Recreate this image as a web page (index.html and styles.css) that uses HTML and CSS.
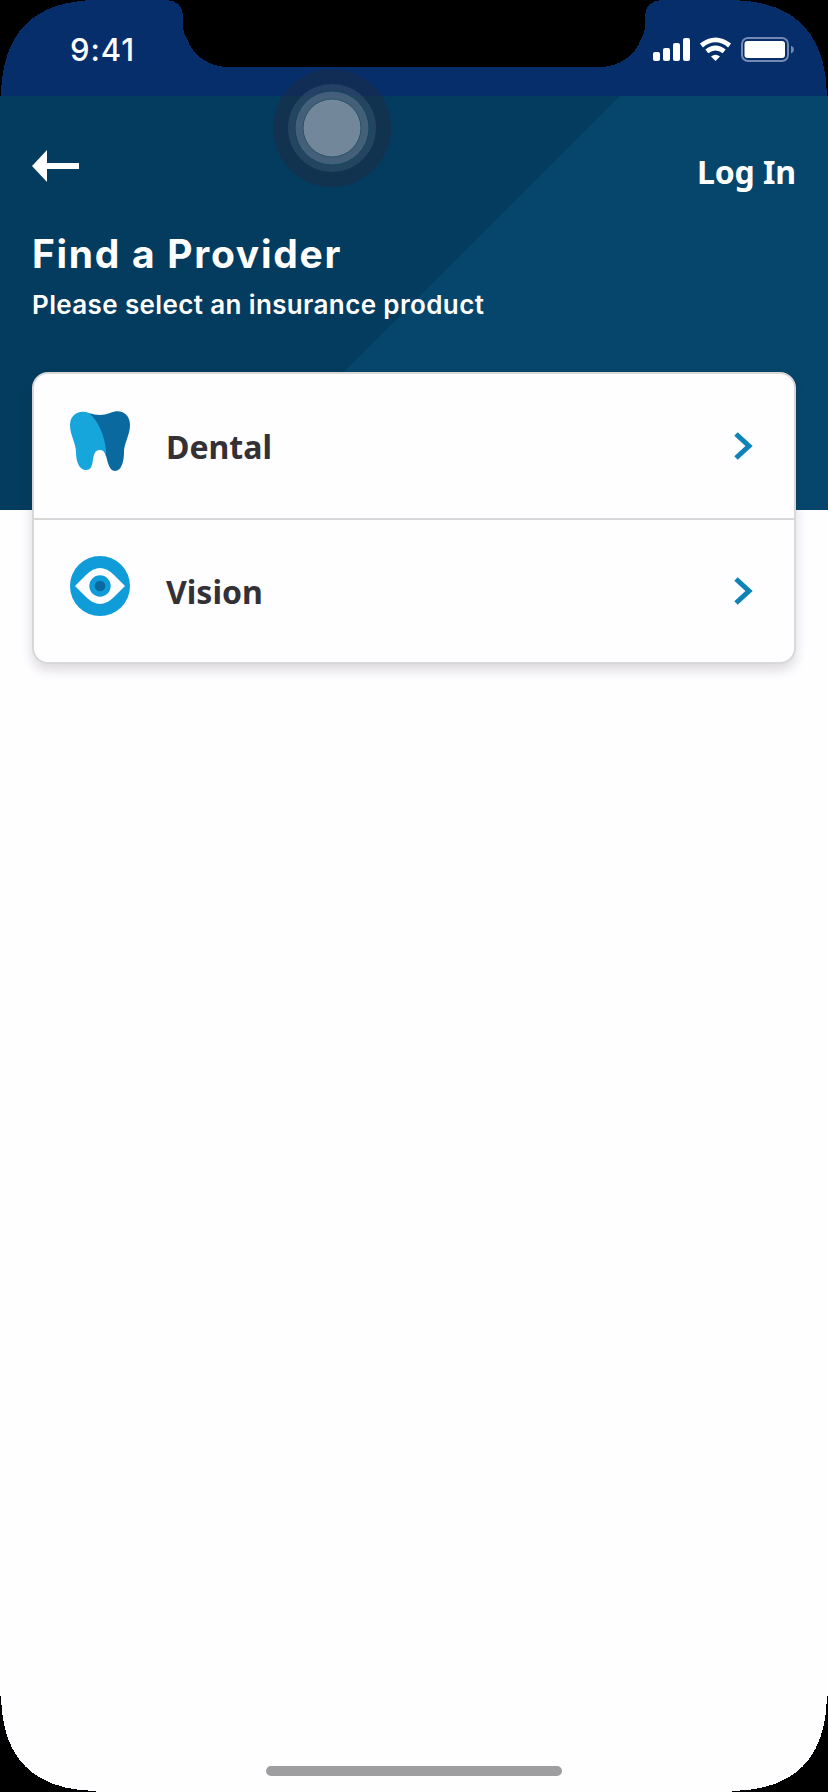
FILE: index.html
```html
<!DOCTYPE html>
<html lang="en">
<head>
<meta charset="utf-8">
<title>Find a Provider</title>
<link rel="stylesheet" href="styles.css">
</head>
<body>
<div class="screen">
  <div class="status-bar">
    <span class="time">9:41</span>
    <svg class="status-icons" width="142" height="26" viewBox="0 0 142 26" aria-hidden="true">
      <g fill="#fff">
        <rect x="0" y="15" width="7" height="9" rx="2"/>
        <rect x="10" y="11" width="7" height="13" rx="2"/>
        <rect x="20" y="6" width="7" height="18" rx="2"/>
        <rect x="30" y="1" width="7" height="23" rx="2"/>
        <path d="M62.500 24L58 19.600Q62.500 15.800 67 19.600Z"/>
        <rect x="91.500" y="4" width="40.500" height="17" rx="3"/>
      </g>
      <g fill="none" stroke="#fff" stroke-width="4.800">
        <path d="M48.400 8.500Q62.500 -2.700 76.600 8.500"/>
        <path d="M53.800 14.400Q62.500 7.600 71.200 14.400"/>
      </g>
      <rect x="89" y="1" width="46" height="23" rx="6" fill="none" stroke="#7488b4" stroke-width="2"/>
      <path d="M138 8.500Q141 10 141 12.500T138 16.500Z" fill="#7488b4"/>
    </svg>
  </div>
  <header class="hero">
    <div class="nav">
      <svg class="back" width="47" height="32" viewBox="0 0 47 32" role="img" aria-label="Back">
        <path d="M0 16L15 0V13H47V19H15V32Z" fill="#fff"/>
      </svg>
      <a class="login">Log In</a>
    </div>
    <h1 class="title">Find a Provider</h1>
    <p class="subtitle">Please select an insurance product</p>
  </header>
  <main class="products">
    <div class="product">
      <svg class="product-icon" width="60" height="60" viewBox="0 0 60 60" aria-hidden="true">
        <path d="M19 2Q30 6 40 2C51-3 60 3 60 14C60 24 54 32 54 41C54 51 51 60 45 60C39 60 38 51 36 45L29 24Z" fill="#0a699f"/>
        <path d="M19 2C9-2 0 4 0 14C0 24 6 32 6 41C6 52 10 59 16 59C27 59 19 39 30 39C33.500 39 35 42 36 45C37 30 29 10 19 2Z" fill="#16a6dc"/>
      </svg>
      <span class="product-name">Dental</span>
      <svg class="chevron" width="19" height="28" viewBox="0 0 19 28" aria-hidden="true"><path d="M2 2L15 14L2 26" fill="none" stroke="#0d83b9" stroke-width="5"/></svg>
    </div>
    <div class="product">
      <svg class="product-icon" width="60" height="60" viewBox="0 0 60 60" aria-hidden="true">
        <circle cx="30" cy="30" r="30" fill="#109bd9"/>
        <path d="M5 30L16 19Q23 12 30 12T44 19L55 30L44 41Q37 48 30 48T16 41Z" fill="#fefdff"/>
        <circle cx="30" cy="30" r="10.700" fill="#109bd9"/>
        <circle cx="30" cy="30" r="5.300" fill="#0a699f"/>
      </svg>
      <span class="product-name">Vision</span>
      <svg class="chevron" width="19" height="28" viewBox="0 0 19 28" aria-hidden="true"><path d="M2 2L15 14L2 26" fill="none" stroke="#0d83b9" stroke-width="5"/></svg>
    </div>
  </main>
  <div class="home-indicator"></div>

  <svg class="touch" width="120" height="120" viewBox="0 0 120 120" aria-hidden="true">
    <circle cx="60" cy="60" r="59" fill="#1d2940" fill-opacity=".5"/>
    <circle cx="60" cy="60" r="44" fill="#819caf" fill-opacity=".18"/>
    <circle cx="60" cy="60" r="37" fill="#a3b3c2" fill-opacity=".25" stroke="#164762"/>
    <circle cx="60" cy="60" r="29" fill="#728799" stroke="#27506a"/>
  </svg>
  <svg class="bezel" width="828" height="1792" viewBox="0 0 828 1792" shape-rendering="crispEdges" aria-hidden="true">
    <path d="M0 0H96C34 1 2 32 1 96H0Z"/>
    <path d="M828 0H732C794 1 826 32 827 96H828Z"/>
    <path d="M166 0C178 1 183 6 183 17C183 29 183 32 187 39C193 56 209 67 229 67H599C619 67 635 56 641 39C645 32 645 29 645 17C645 6 650 1 662 0Z"/>
    <path d="M0 1696H1C2 1759 34 1790 96 1791V1792H0Z"/>
    <path d="M828 1696H827C826 1759 794 1790 732 1791V1792H828Z"/>
  </svg>
</div>
</body>
</html>
```
FILE: styles.css
```css
* { box-sizing: border-box; }

body {
  margin: 0;
  background: #fefdff;
}

.screen {
  position: relative;
  display: flex;
  flex-direction: column;
  width: 828px;
  height: 1792px;
  overflow: hidden;
  background: #fefdff;
  font-family: "Noto Sans", sans-serif;
}

.status-bar {
  display: flex;
  justify-content: space-between;
  height: 96px;
  padding: 37px 33px 0 70px;
  background: #052e6b;
  color: #fff;
}

.time {
  font: 500 31px/26px Inter, sans-serif;
  letter-spacing: 0.9px;
}

.hero {
  height: 414px;
  padding: 54px 32px 0;
  background: linear-gradient(135deg, #043c5f 438px, #07466c 439px);
  color: #fff;
}

.nav {
  display: flex;
  justify-content: space-between;
  height: 78px;
}

.login {
  font-size: 32px;
  line-height: 44px;
  font-weight: 700;
  letter-spacing: -0.1px;
}

.title {
  margin: 0;
  font: 700 39px/52px Inter, sans-serif;
  letter-spacing: 1.7px;
}

.subtitle {
  margin: 7px 0 0;
  font: 600 26px/36px Inter, sans-serif;
  letter-spacing: 0.37px;
}

.products {
  margin: -138px 32px 0;
  border: 2px solid #d9d8d6;
  border-radius: 16px;
  background: #fefdff;
  box-shadow: 0 6px 12px rgb(40 30 40 / 16%);
}

.product {
  display: flex;
  align-items: center;
  height: 142px;
  padding: 0 41px 0 36px;
}

.product:first-child {
  height: 146px;
  border-bottom: 2px solid #d9d8d6;
}

.product-icon {
  margin-bottom: 10px;
  overflow: visible;
}

.product-name {
  flex: 1;
  padding: 1px 0 0 36px;
  color: #333136;
  font-size: 32px;
  line-height: 44px;
  font-weight: 700;
}

.home-indicator {
  width: 296px;
  height: 10px;
  margin: auto auto 16px;
  border-radius: 5px;
  background: #9e9da0;
}

.touch {
  position: absolute;
  top: 68px;
  left: 272px;
}

.bezel {
  position: absolute;
  inset: 0;
}
```
